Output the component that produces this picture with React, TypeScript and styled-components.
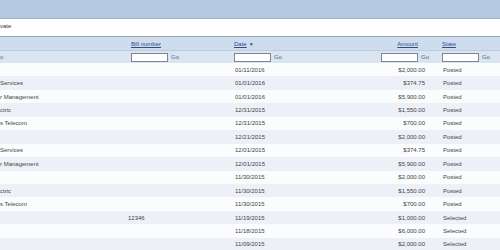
import React from 'react'
import styled, { createGlobalStyle } from 'styled-components'

interface Bill {
  payee: string
  bill?: string
  date: string
  amount: string
  state: string
}

const bills: Bill[] = [
  { payee: '', date: '01/11/2016', amount: '$2,000.00', state: 'Posted' },
  { payee: 'Services', date: '01/01/2016', amount: '$374.75', state: 'Posted' },
  { payee: 'r Management', date: '01/01/2016', amount: '$5,900.00', state: 'Posted' },
  { payee: 'ctric', date: '12/31/2015', amount: '$1,550.00', state: 'Posted' },
  { payee: 's Telecom', date: '12/31/2015', amount: '$700.00', state: 'Posted' },
  { payee: '', date: '12/21/2015', amount: '$2,000.00', state: 'Posted' },
  { payee: 'Services', date: '12/01/2015', amount: '$374.75', state: 'Posted' },
  { payee: 'r Management', date: '12/01/2015', amount: '$5,900.00', state: 'Posted' },
  { payee: '', date: '11/30/2015', amount: '$2,000.00', state: 'Posted' },
  { payee: 'ctric', date: '11/30/2015', amount: '$1,550.00', state: 'Posted' },
  { payee: 's Telecom', date: '11/30/2015', amount: '$700.00', state: 'Posted' },
  { payee: '', bill: '12346', date: '11/19/2015', amount: '$1,000.00', state: 'Selected' },
  { payee: '', date: '11/18/2015', amount: '$6,000.00', state: 'Selected' },
  { payee: '', date: '11/09/2015', amount: '$2,000.00', state: 'Selected' },
]

const GlobalStyle = createGlobalStyle`
  html, body {
    margin: 0;
    padding: 0;
    background: #ffffff;
    overflow: hidden;
  }
  body {
    font-family: "Liberation Sans", Arial, sans-serif;
    font-size: 6px;
    color: #3a3a3a;
  }
`

const App: React.FC = () => {
  return (
    <Page>
      <GlobalStyle />
      <TopBar />
      <TitleBar>vate</TitleBar>
      <Grid>
        <HeaderRow>
          <HeadCell />
          <HeadCell $pad={3}>
            <SortLink href="#">Bill number</SortLink>
          </HeadCell>
          <HeadCell>
            <SortLink href="#">Date</SortLink>
            <SortArrow>▼</SortArrow>
          </HeadCell>
          <HeadCell $align="right" $padRight={24}>
            <SortLink href="#">Amount</SortLink>
          </HeadCell>
          <HeadCell>
            <SortLink href="#">State</SortLink>
          </HeadCell>
        </HeaderRow>
        <FilterRow>
          <FilterCell>
            <GoLabel>o</GoLabel>
          </FilterCell>
          <FilterCell $pad={3}>
            <FilterInput />
            <GoLabel>Go</GoLabel>
          </FilterCell>
          <FilterCell>
            <FilterInput />
            <GoLabel>Go</GoLabel>
          </FilterCell>
          <FilterCell>
            <FilterInput />
            <GoLabel>Go</GoLabel>
          </FilterCell>
          <FilterCell>
            <FilterInput />
            <GoLabel>Go</GoLabel>
          </FilterCell>
        </FilterRow>
        {bills.map((b, i) => (
          <DataRow key={i} $odd={i % 2 === 1}>
            <Cell>{b.payee}</Cell>
            <Cell>{b.bill}</Cell>
            <Cell $pad={1}>{b.date}</Cell>
            <Cell $align="right" $padRight={17}>
              {b.amount}
            </Cell>
            <Cell $pad={1}>{b.state}</Cell>
          </DataRow>
        ))}
      </Grid>
    </Page>
  )
}

export default App

const Page = styled.div`
  width: 500px;
  height: 250px;
  overflow: hidden;
`

const TopBar = styled.div`
  height: 18px;
  background: #b5c9e2;
  border-bottom: 1px solid #9fb3cb;
`

const TitleBar = styled.div`
  height: 18px;
  padding-top: 3px;
  box-sizing: border-box;
  line-height: 8px;
  color: #333333;
  border-bottom: 1px solid #95a6b9;
`

const Grid = styled.div`
  display: grid;
  grid-template-columns: 128px 106px 147px 61px 1fr;
`

const HeaderRow = styled.div`
  display: contents;
`

const HeadCell = styled.div<{ $align?: string; $pad?: number; $padRight?: number }>`
  height: 12px;
  box-sizing: border-box;
  padding-top: 1px;
  display: flex;
  align-items: center;
  justify-content: ${({ $align }) => ($align === 'right' ? 'flex-end' : 'flex-start')};
  padding-left: ${({ $pad }) => $pad ?? 0}px;
  padding-right: ${({ $padRight }) => $padRight ?? 0}px;
  background: #cfdced;
  border-bottom: 1px solid #bccbde;
  box-sizing: content-box;
`

const SortLink = styled.a`
  color: #2a4f86;
  text-decoration: underline;
`

const SortArrow = styled.span`
  color: #2a4f86;
  font-size: 5px;
  margin-left: 2px;
`

const FilterRow = styled.div`
  display: contents;
`

const FilterCell = styled.div<{ $pad?: number }>`
  height: 12px;
  display: flex;
  align-items: center;
  padding-left: ${({ $pad }) => $pad ?? 0}px;
  background: #dbe5f2;
`

const FilterInput = styled.div`
  width: 35px;
  height: 7px;
  background: #ffffff;
  border: 1px solid #7b8795;
`

const GoLabel = styled.span`
  color: #4d6a98;
  margin-left: 3px;
  &:first-child {
    margin-left: 0;
  }
`

const DataRow = styled.div<{ $odd: boolean }>`
  display: contents;
  & > div {
    background: ${({ $odd }) => ($odd ? '#edf1f7' : '#fbfcfe')};
  }
`

const Cell = styled.div<{ $align?: string; $pad?: number; $padRight?: number }>`
  height: 13.45px;
  display: flex;
  align-items: center;
  justify-content: ${({ $align }) => ($align === 'right' ? 'flex-end' : 'flex-start')};
  padding-left: ${({ $pad }) => $pad ?? 0}px;
  padding-right: ${({ $padRight }) => $padRight ?? 0}px;
  color: #444444;
  white-space: nowrap;
`
